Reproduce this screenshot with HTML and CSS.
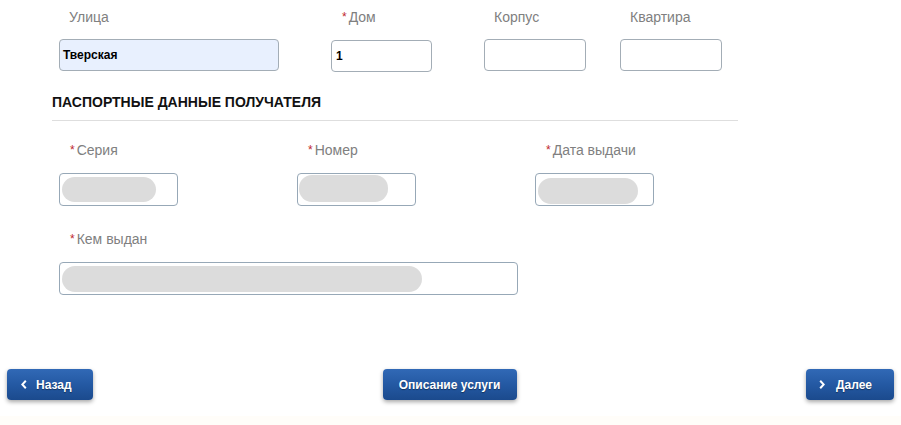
FILE: index.html
```html
<!DOCTYPE html>
<html lang="ru">
<head>
<meta charset="utf-8">
<title>Паспортные данные</title>
<link rel="stylesheet" href="styles.css">
</head>
<body>
<div class="page">
  <div class="row row-address">
    <div class="field f-street">
      <div class="label">Улица</div>
      <div class="input autofill">Тверская</div>
    </div>
    <div class="field f-house">
      <div class="label lbl-req"><span class="req">*</span>Дом</div>
      <div class="input">1</div>
    </div>
    <div class="field f-korpus">
      <div class="label">Корпус</div>
      <div class="input"></div>
    </div>
    <div class="field f-flat">
      <div class="label">Квартира</div>
      <div class="input"></div>
    </div>
  </div>

  <h2 class="section-title">ПАСПОРТНЫЕ ДАННЫЕ ПОЛУЧАТЕЛЯ</h2>

  <div class="row row-passport">
    <div class="field f-pass">
      <div class="label lbl-req"><span class="req">*</span>Серия</div>
      <div class="input tall"><span class="pill pill-series"></span></div>
    </div>
    <div class="field f-pass">
      <div class="label lbl-req"><span class="req">*</span>Номер</div>
      <div class="input tall"><span class="pill pill-number"></span></div>
    </div>
    <div class="field f-pass">
      <div class="label lbl-req"><span class="req">*</span>Дата выдачи</div>
      <div class="input tall"><span class="pill pill-date"></span></div>
    </div>
  </div>

  <div class="row row-issued">
    <div class="field f-issued">
      <div class="label lbl-req"><span class="req">*</span>Кем выдан</div>
      <div class="input tall"><span class="pill pill-issued"></span></div>
    </div>
  </div>

  <div class="actions">
    <button class="btn btn-back" type="button">
      <svg class="chev" width="6" height="9" viewBox="0 0 6 9"><polyline points="4.8,0.8 1.3,4.5 4.8,8.2" fill="none" stroke="#fff" stroke-width="2"/></svg>
      <span>Назад</span>
    </button>
    <button class="btn btn-info" type="button">Описание услуги</button>
    <button class="btn btn-next" type="button">
      <svg class="chev" width="6" height="9" viewBox="0 0 6 9"><polyline points="1.2,0.8 4.7,4.5 1.2,8.2" fill="none" stroke="#fff" stroke-width="2"/></svg>
      <span>Далее</span>
    </button>
  </div>
  <div class="footer-strip"></div>
</div>
</body>
</html>
```

FILE: styles.css
```css
html, body {
  margin: 0;
  padding: 0;
  background: #ffffff;
}

body {
  font-family: "Liberation Sans", Arial, sans-serif;
  color: #000;
}

.page {
  padding-top: 9px;
}

.row {
  display: flex;
  padding-left: 59px;
}

.label {
  font-size: 14px;
  line-height: 16px;
  color: #808080;
  padding-left: 10px;
  margin-bottom: 14px;
  white-space: nowrap;
}

.lbl-req {
  padding-left: 11px;
}

.req {
  color: #c0272d;
  font-size: 12px;
  margin-right: 2px;
  position: relative;
  top: -1px;
}

.input {
  box-sizing: border-box;
  height: 32px;
  border: 1px solid #a3adb6;
  border-radius: 4px;
  background: #fff;
  display: flex;
  align-items: center;
  padding-left: 3px;
  font-size: 12px;
  font-weight: bold;
  color: #000;
}

.input.tall {
  height: 33px;
  padding-left: 1px;
  border-color: #97a8b7;
}

.autofill {
  background: #e8f0fe;
}

.f-street { width: 220px; }
.f-house { width: 101px; margin-left: 52px; }
.f-house .input { padding-left: 4px; }
.f-korpus { width: 102px; margin-left: 52px; }
.f-flat { width: 102px; margin-left: 34px; }

.section-title {
  margin: 22px 0 0 52px;
  width: 686px;
  font-size: 14px;
  line-height: 16px;
  font-weight: bold;
  color: #111;
  padding-bottom: 10px;
  border-bottom: 1px solid #dedede;
}

.row-passport {
  margin-top: 21px;
  column-gap: 119px;
}

.row-passport .label {
  margin-bottom: 14px;
}

.f-pass { width: 119px; }

.row-issued {
  margin-top: 25px;
}

.row-issued .label {
  margin-bottom: 14px;
}

.f-issued { width: 459px; }

.pill {
  display: block;
  height: 25px;
  border-radius: 13px;
  background: #dcdcdc;
}

.pill-series { width: 94px; margin-left: 1px; }
.pill-number { width: 89px; margin-left: 0; height: 27px; margin-top: -2px; }
.pill-date { width: 100px; margin-left: 1px; height: 26px; margin-top: 3px; }
.pill-issued { width: 360px; margin-left: 1px; height: 26px; }

.actions {
  display: flex;
  justify-content: space-between;
  padding: 0 7px;
  margin-top: 74px;
}

.btn {
  box-sizing: border-box;
  height: 31px;
  border: none;
  border-radius: 4px;
  background: linear-gradient(to bottom, #3169b6 0%, #2459a3 50%, #1b4a8d 100%);
  box-shadow: 0 2px 4px rgba(0, 0, 0, 0.35);
  color: #fff;
  font-family: "Liberation Sans", Arial, sans-serif;
  font-size: 12px;
  font-weight: bold;
  text-shadow: 0 1px 1px rgba(0, 0, 0, 0.4);
  display: flex;
  align-items: center;
  padding: 0;
  cursor: pointer;
}

.chev {
  display: block;
  flex: none;
}

.btn-back {
  width: 86px;
  padding-left: 14px;
  gap: 9px;
}

.btn-info {
  width: 134px;
  justify-content: center;
}

.btn-next {
  width: 88px;
  padding-left: 13px;
  gap: 11px;
}

.footer-strip {
  margin-top: 16px;
  height: 9px;
  background: #fffdf9;
}
```
